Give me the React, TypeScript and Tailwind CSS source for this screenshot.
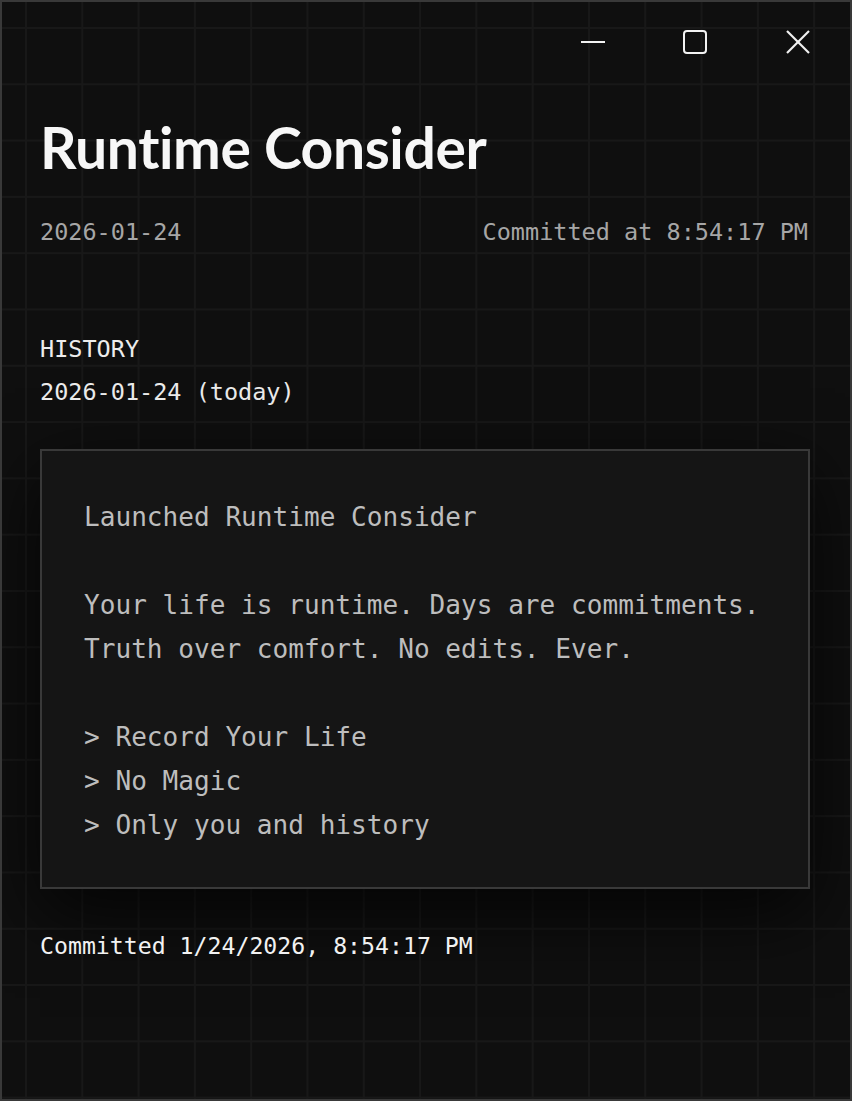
import React from "react";

const mono = "font-['DejaVu_Sans_Mono','Liberation_Mono',monospace]";

export default function App() {
  const cardLines = [
    "Launched Runtime Consider",
    "",
    "Your life is runtime. Days are commitments.",
    "Truth over comfort. No edits. Ever.",
    "",
    "> Record Your Life",
    "> No Magic",
    "> Only you and history",
  ];
  return (
    <div className="w-[852px] h-[1101px] border-2 border-[#393939] bg-[#0f0f0f] bg-[linear-gradient(to_right,#181818_2px,transparent_2px),linear-gradient(to_bottom,#181818_2px,transparent_2px)] bg-[length:56.3px_56.3px] bg-[position:23px_25px] overflow-hidden flex flex-col">
      <div className="h-[80px] flex justify-end">
        <div className="w-[102px] flex items-center justify-center">
          <svg width="26" height="26" viewBox="0 0 26 26" fill="none" stroke="#f2f2f2" strokeWidth="2">
            <line x1="1" y1="13" x2="25" y2="13" />
          </svg>
        </div>
        <div className="w-[102px] flex items-center justify-center">
          <svg width="26" height="26" viewBox="0 0 26 26" fill="none" stroke="#f2f2f2" strokeWidth="2">
            <rect x="2" y="2" width="22" height="22" rx="3" />
          </svg>
        </div>
        <div className="w-[104px] flex items-center justify-center">
          <svg width="26" height="26" viewBox="0 0 26 26" fill="none" stroke="#f2f2f2" strokeWidth="2.2">
            <line x1="2" y1="2" x2="24" y2="24" />
            <line x1="24" y1="2" x2="2" y2="24" />
          </svg>
        </div>
      </div>
      <div className="pl-[38px] pr-[40px] flex flex-col">
        <h1 className="mt-[28px] h-[74px] leading-[74px] text-[57px] font-bold text-[#f7f7f7] font-['Lato','Open_Sans',sans-serif] tracking-[-0.4px]">
          Runtime Consider
        </h1>
        <div className={`mt-[32px] h-[32px] leading-[32px] flex justify-between text-[23.5px] text-[#a6a6a6] ${mono}`}>
          <span>2026-01-24</span>
          <span className="mr-[2px]">Committed at 8:54:17 PM</span>
        </div>
        <div className={`mt-[80px] text-[23.5px] leading-[43px] text-[#ececec] ${mono}`}>
          <div>HISTORY</div>
          <div>2026-01-24 (today)</div>
        </div>
        <div className="mt-[35px] h-[440px] border-2 border-[#393939] bg-[#151515] shadow-[0_24px_70px_rgba(0,0,0,0.75)] pl-[42px] pr-[40px] pt-[44px] pb-[40px]">
          <div className={`text-[26.1px] leading-[44px] text-[#bdbdbd] whitespace-pre ${mono}`}>
            {cardLines.map((l, i) => (
              <div key={i} className="h-[44px]">{l}</div>
            ))}
          </div>
        </div>
        <div className={`mt-[37px] h-[40px] leading-[40px] text-[23.2px] text-[#f2f2f2] ${mono}`}>
          Committed 1/24/2026, 8:54:17 PM
        </div>
      </div>
    </div>
  );
}
